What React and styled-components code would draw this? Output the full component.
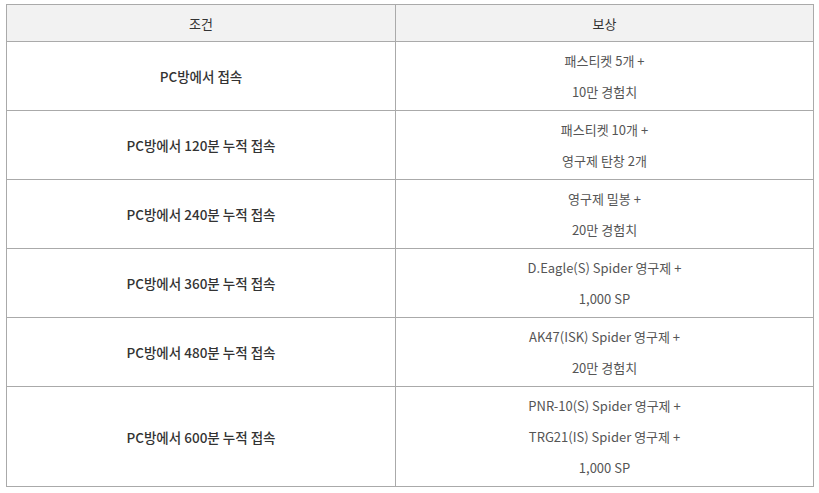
import styled, { createGlobalStyle } from "styled-components";

const GlobalStyle = createGlobalStyle`
  body {
    margin: 0;
    background: #fff;
    font-family: "Noto Sans CJK KR", "Noto Sans", sans-serif;
  }
`;

const Wrapper = styled.div`
  padding: 4px 6px;
`;

const Table = styled.table`
  width: 808px;
  border-collapse: collapse;
  table-layout: fixed;
  font-size: 13px;
`;

const Th = styled.th`
  height: 36px;
  padding: 0;
  background: #f2f2f2;
  border: 1px solid #aaaaaa;
  color: #333;
  font-weight: 400;
  text-align: center;
  vertical-align: middle;
`;

const Condition = styled.td`
  border: 1px solid #aaaaaa;
  color: #333;
  font-weight: 500;
  font-size: 13.5px;
  text-align: center;
  vertical-align: middle;
  padding: 0 10px;
`;

const Reward = styled.td`
  border: 1px solid #aaaaaa;
  color: #555;
  text-align: center;
  vertical-align: middle;
  padding: 3px 10px;
`;

const Line = styled.div`
  line-height: 31px;
`;

const rows = [
  { cond: "PC방에서 접속", reward: ["패스티켓 5개 +", "10만 경험치"] },
  { cond: "PC방에서 120분 누적 접속", reward: ["패스티켓 10개 +", "영구제 탄창 2개"] },
  { cond: "PC방에서 240분 누적 접속", reward: ["영구제 밀봉 +", "20만 경험치"] },
  { cond: "PC방에서 360분 누적 접속", reward: ["D.Eagle(S) Spider 영구제 +", "1,000 SP"] },
  { cond: "PC방에서 480분 누적 접속", reward: ["AK47(ISK) Spider 영구제 +", "20만 경험치"] },
  {
    cond: "PC방에서 600분 누적 접속",
    reward: ["PNR-10(S) Spider 영구제 +", "TRG21(IS) Spider 영구제 +", "1,000 SP"],
  },
];

export default function App() {
  return (
    <>
      <GlobalStyle />
      <Wrapper>
        <Table>
          <colgroup>
            <col style={{ width: "389px" }} />
            <col />
          </colgroup>
          <thead>
            <tr>
              <Th>조건</Th>
              <Th>보상</Th>
            </tr>
          </thead>
          <tbody>
            {rows.map((row) => (
              <tr key={row.cond}>
                <Condition>{row.cond}</Condition>
                <Reward>
                  {row.reward.map((line) => (
                    <Line key={line}>{line}</Line>
                  ))}
                </Reward>
              </tr>
            ))}
          </tbody>
        </Table>
      </Wrapper>
    </>
  );
}
